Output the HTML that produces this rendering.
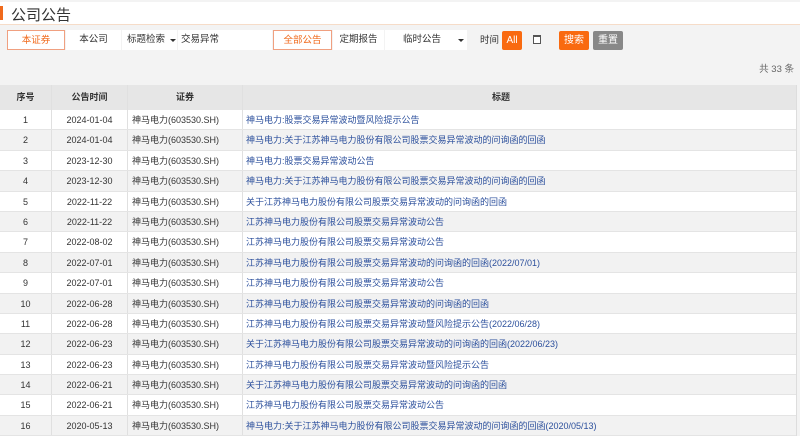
<!DOCTYPE html>
<html><head><meta charset="utf-8"><style>
*{margin:0;padding:0;box-sizing:border-box}
body{width:800px;height:436px;overflow:hidden;background:#f3f3f3;font-family:"Liberation Sans","Noto Sans CJK SC",sans-serif;font-size:9px;color:#333;position:relative}
.top{position:absolute;left:0;top:2px;width:800px;height:23px;background:#fff;border-bottom:1px solid #f6dcc8}
.top .bar{position:absolute;left:0;top:4px;width:3px;height:14px;background:#f06a1c}
.top .t{position:absolute;left:11px;top:2px;font-size:15px;color:#333}
.tb{position:absolute;top:30px;height:20px;background:#fff;font-size:9.5px;line-height:20px;text-align:center}
.ob{border:1px solid #f0a080;color:#f06a1c}
.caret{position:absolute;width:0;height:0;border-left:3px solid transparent;border-right:3px solid transparent;border-top:3px solid #333;top:9px}
.btn{position:absolute;top:31px;height:19px;line-height:19px;color:#fff;text-align:center;border-radius:2px;font-size:10px}
.cnt{position:absolute;right:6px;top:61px;font-size:9.5px;color:#666}
.tbl{position:absolute;left:0;top:85px;width:797px;border-right:1px solid #ddd}
.r{display:flex;height:20.4px;line-height:20.4px;border-bottom:1px solid #e4e4e4;background:#fff}
.r.g{background:#f2f2f2}
.r.h{height:25px;line-height:25px;background:#e6e6e6;font-weight:bold;color:#333;border-bottom:none}
.r div{border-right:1px solid #e0e0e0;white-space:nowrap;overflow:hidden}
.c1{width:52px;text-align:center}.c2{width:76px;text-align:center}.c3{width:115px;padding-left:4px}.c4{flex:1;padding-left:3px;color:#2b4f9c;border-right:none!important}
.r.h .c3{text-align:center;padding:0}.r.h .c4{text-align:center;color:#333;padding-right:40px}
</style></head><body>
<div class="top"><div class="bar"></div><div class="t">公司公告</div></div>
<div class="tb ob" style="left:7px;width:58px">本证券</div>
<div class="tb" style="left:66px;width:55px">本公司</div>
<div class="tb" style="left:122px;width:55px;text-align:left;padding-left:5px">标题检索<span class="caret" style="left:48px"></span></div>
<div class="tb" style="left:178px;width:94px;text-align:left;padding-left:3px">交易异常</div>
<div class="tb ob" style="left:273px;width:59px">全部公告</div>
<div class="tb" style="left:333px;width:51px">定期报告</div>
<div class="tb" style="left:385px;width:82px;text-align:left;padding-left:18px">临时公告<span class="caret" style="left:73px"></span></div>
<div style="position:absolute;left:480px;top:31px;line-height:19px;font-size:9.5px">时间</div>
<div class="btn" style="left:502px;width:20px;background:#f96a10">All</div>
<div style="position:absolute;left:533px;top:35px;width:8px;height:9px;border:1px solid #555;border-top-width:2px;background:#fff"></div>
<div class="btn" style="left:559px;width:30px;background:#f96a10">搜索</div>
<div class="btn" style="left:593px;width:30px;background:#888">重置</div>
<div class="cnt">共 33 条</div>
<div class="tbl">
<div class="r h"><div class="c1">序号</div><div class="c2">公告时间</div><div class="c3">证券</div><div class="c4">标题</div></div>
<div class="r"><div class="c1">1</div><div class="c2">2024-01-04</div><div class="c3">神马电力(603530.SH)</div><div class="c4">神马电力:股票交易异常波动暨风险提示公告</div></div>
<div class="r g"><div class="c1">2</div><div class="c2">2024-01-04</div><div class="c3">神马电力(603530.SH)</div><div class="c4">神马电力:关于江苏神马电力股份有限公司股票交易异常波动的问询函的回函</div></div>
<div class="r"><div class="c1">3</div><div class="c2">2023-12-30</div><div class="c3">神马电力(603530.SH)</div><div class="c4">神马电力:股票交易异常波动公告</div></div>
<div class="r g"><div class="c1">4</div><div class="c2">2023-12-30</div><div class="c3">神马电力(603530.SH)</div><div class="c4">神马电力:关于江苏神马电力股份有限公司股票交易异常波动的问询函的回函</div></div>
<div class="r"><div class="c1">5</div><div class="c2">2022-11-22</div><div class="c3">神马电力(603530.SH)</div><div class="c4">关于江苏神马电力股份有限公司股票交易异常波动的问询函的回函</div></div>
<div class="r g"><div class="c1">6</div><div class="c2">2022-11-22</div><div class="c3">神马电力(603530.SH)</div><div class="c4">江苏神马电力股份有限公司股票交易异常波动公告</div></div>
<div class="r"><div class="c1">7</div><div class="c2">2022-08-02</div><div class="c3">神马电力(603530.SH)</div><div class="c4">江苏神马电力股份有限公司股票交易异常波动公告</div></div>
<div class="r g"><div class="c1">8</div><div class="c2">2022-07-01</div><div class="c3">神马电力(603530.SH)</div><div class="c4">江苏神马电力股份有限公司股票交易异常波动的问询函的回函(2022/07/01)</div></div>
<div class="r"><div class="c1">9</div><div class="c2">2022-07-01</div><div class="c3">神马电力(603530.SH)</div><div class="c4">江苏神马电力股份有限公司股票交易异常波动公告</div></div>
<div class="r g"><div class="c1">10</div><div class="c2">2022-06-28</div><div class="c3">神马电力(603530.SH)</div><div class="c4">江苏神马电力股份有限公司股票交易异常波动的问询函的回函</div></div>
<div class="r"><div class="c1">11</div><div class="c2">2022-06-28</div><div class="c3">神马电力(603530.SH)</div><div class="c4">江苏神马电力股份有限公司股票交易异常波动暨风险提示公告(2022/06/28)</div></div>
<div class="r g"><div class="c1">12</div><div class="c2">2022-06-23</div><div class="c3">神马电力(603530.SH)</div><div class="c4">关于江苏神马电力股份有限公司股票交易异常波动的问询函的回函(2022/06/23)</div></div>
<div class="r"><div class="c1">13</div><div class="c2">2022-06-23</div><div class="c3">神马电力(603530.SH)</div><div class="c4">江苏神马电力股份有限公司股票交易异常波动暨风险提示公告</div></div>
<div class="r g"><div class="c1">14</div><div class="c2">2022-06-21</div><div class="c3">神马电力(603530.SH)</div><div class="c4">关于江苏神马电力股份有限公司股票交易异常波动的问询函的回函</div></div>
<div class="r"><div class="c1">15</div><div class="c2">2022-06-21</div><div class="c3">神马电力(603530.SH)</div><div class="c4">江苏神马电力股份有限公司股票交易异常波动公告</div></div>
<div class="r g"><div class="c1">16</div><div class="c2">2020-05-13</div><div class="c3">神马电力(603530.SH)</div><div class="c4">神马电力:关于江苏神马电力股份有限公司股票交易异常波动的问询函的回函(2020/05/13)</div></div>
</div>
</body></html>
